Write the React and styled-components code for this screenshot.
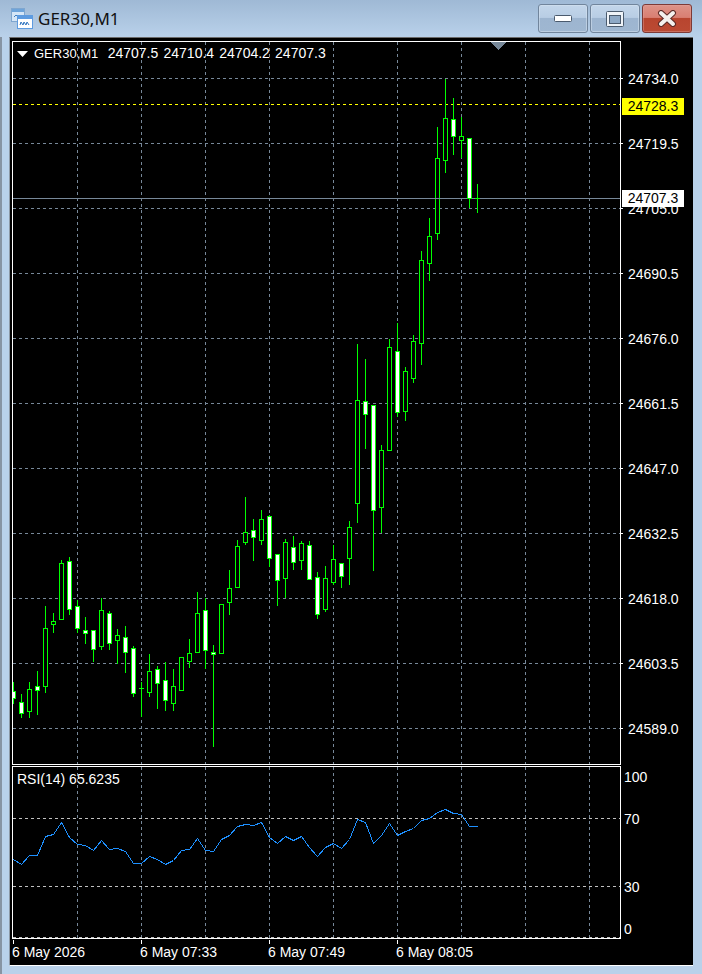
import React from "react";
import styled, { createGlobalStyle } from "styled-components";

const GlobalStyle = createGlobalStyle`
  html, body {
    margin: 0;
    padding: 0;
    background: #b9d1ea;
  }
`;

// candles: [x, high, low, bodyTop, bodyBottom, white]
const candles = [
  [13, 682, 703, 691, 698, 1],
  [21, 694, 717, 702, 713, 1],
  [29, 682, 717, 689, 711, 0],
  [37, 671, 714, 686, 690, 1],
  [45, 606, 692, 628, 686, 0],
  [53, 613, 632, 621, 624, 0],
  [61, 560, 619, 563, 619, 0],
  [69, 557, 614, 561, 609, 1],
  [77, 600, 632, 606, 628, 1],
  [85, 617, 643, 630, 633, 1],
  [93, 630, 661, 630, 649, 1],
  [101, 598, 649, 610, 646, 0],
  [109, 611, 649, 613, 643, 1],
  [117, 629, 663, 635, 640, 0],
  [125, 626, 672, 637, 652, 1],
  [133, 646, 696, 648, 693, 1],
  [141, 682, 716, 688, 688, 0],
  [149, 654, 696, 671, 692, 0],
  [157, 666, 708, 669, 683, 1],
  [165, 662, 710, 680, 700, 1],
  [173, 669, 710, 686, 703, 0],
  [181, 657, 690, 657, 690, 0],
  [189, 639, 667, 653, 661, 0],
  [197, 592, 652, 613, 652, 0],
  [205, 598, 668, 610, 650, 1],
  [213, 645, 746, 652, 654, 1],
  [221, 604, 653, 604, 653, 0],
  [229, 570, 614, 588, 602, 0],
  [237, 540, 587, 546, 587, 0],
  [245, 497, 544, 532, 542, 0],
  [253, 519, 560, 530, 537, 1],
  [261, 510, 544, 519, 540, 0],
  [269, 515, 566, 516, 558, 1],
  [277, 554, 605, 554, 580, 1],
  [285, 539, 597, 542, 578, 0],
  [293, 536, 569, 547, 562, 1],
  [301, 541, 569, 543, 560, 0],
  [309, 541, 579, 545, 579, 1],
  [317, 572, 618, 577, 614, 1],
  [325, 566, 611, 578, 609, 0],
  [333, 545, 584, 559, 582, 0],
  [341, 563, 587, 563, 576, 1],
  [349, 521, 584, 527, 558, 0],
  [357, 344, 522, 400, 503, 0],
  [365, 359, 448, 401, 414, 1],
  [373, 405, 570, 405, 510, 1],
  [381, 445, 532, 450, 507, 0],
  [389, 339, 450, 347, 450, 0],
  [397, 323, 416, 351, 412, 1],
  [405, 367, 420, 371, 411, 0],
  [413, 335, 382, 341, 378, 0],
  [421, 251, 364, 260, 343, 0],
  [429, 218, 280, 236, 263, 0],
  [437, 127, 239, 158, 233, 0],
  [445, 79, 172, 118, 160, 0],
  [453, 98, 154, 119, 136, 1],
  [461, 117, 157, 136, 140, 0],
  [469, 138, 207, 138, 198, 1],
  [477, 184, 212, 198, 198, 0],
];

const rsi = [
  859, 864, 855, 855, 836, 834, 822, 837, 844, 845, 850, 840, 849, 848, 851, 863, 863, 856, 859, 864,
  860, 850, 849, 838, 850, 851, 839, 835, 826, 824, 825, 822, 837, 843, 836, 840, 836, 847, 856, 847,
  843, 848, 839, 819, 822, 843, 835, 823, 835, 831, 828, 820, 818, 812, 809, 813, 814, 826, 826,
];

const prices = [
  "24734.0", "24719.5", "24705.0", "24690.5", "24676.0", "24661.5",
  "24647.0", "24632.5", "24618.0", "24603.5", "24589.0",
];

const gridX = [77, 141, 205, 269, 333, 397, 461, 525, 589];
const gridY = prices.map((_, i) => 78 + i * 65);

const rsiLevels = [
  { label: "100", gap: 1 },
  { label: "70", gap: 22 },
  { label: "30", gap: 48 },
  { label: "0", gap: 22 },
];

const times = ["6 May 2026", "6 May 07:33", "6 May 07:49", "6 May 08:05"];

const Window = styled.div`
  width: 702px;
  height: 974px;
  display: flex;
  flex-direction: column;
  overflow: hidden;
  background: #b9d1ea;
`;

const TitleBar = styled.div`
  height: 37px;
  flex: none;
  display: flex;
  align-items: center;
  padding: 0 10px 0 11px;
  box-sizing: border-box;
  background: linear-gradient(#9fb9d5, #b9d1ea);
`;

const AppIcon = styled.svg`
  width: 22px;
  height: 24px;
  margin-right: 5px;
  flex: none;
`;

const Title = styled.div`
  flex: 1;
  font: 17px "Noto Sans", "Open Sans", sans-serif;
  color: #111;
`;

const Buttons = styled.div`
  display: flex;
  gap: 2px;
`;

const CaptionButton = styled.div`
  width: 50px;
  height: 29px;
  box-sizing: border-box;
  display: flex;
  align-items: center;
  justify-content: center;
  border-radius: 3px;
  border: 1px solid ${(p) => (p.$close ? "#7d3a36" : "#71859c")};
  box-shadow: inset 0 0 0 1px ${(p) => (p.$close ? "#e3a79f66" : "#d5e2f088")};
  background: ${(p) =>
    p.$close
      ? "linear-gradient(#dd9388 0, #d97f72 46%, #b8452f 50%, #bb4a33 100%)"
      : "linear-gradient(#c3d6ea 0, #b8cde4 46%, #9db5d0 50%, #9fb7d1 100%)"};
`;

const Body = styled.div`
  flex: 1;
  display: flex;
  padding: 0 9px 8px 7px;
  border-left: 2px solid #8794a3;
  min-height: 0;
`;

const Frame = styled.div`
  flex: 1;
  box-sizing: border-box;
  background: #000;
  border-top: 1px solid #6b6b6b;
  border-left: 1px solid #8d99a6;
  border-bottom: 1px solid #fff;
  padding: 3px 0 0 2px;
  display: grid;
  grid-template-columns: 609px 1fr;
  grid-template-rows: 724px 173px 1fr;
  row-gap: 1px;
  font: 14px "Liberation Sans", Arial, sans-serif;
  color: #fff;
`;

const Pane = styled.div`
  position: relative;
  box-sizing: border-box;
  border: 1px solid #fff;
`;

const PlotSvg = styled.svg`
  display: block;
  width: 100%;
  height: 100%;
  shape-rendering: crispEdges;
`;

const Legend = styled.div`
  position: absolute;
  left: 4px;
  top: ${(p) => p.$top}px;
  display: flex;
  align-items: center;
  white-space: pre;
  line-height: 17px;
  word-spacing: ${(p) => p.$wordGap || 0}px;
`;

const LegendName = styled.span`
  font-size: 13px;
  margin-left: 6px;
  margin-right: -1px;
`;

const Marker = styled.svg`
  width: 11px;
  height: 6px;
  flex: none;
`;

const PriceAxis = styled.div`
  position: relative;
  padding-top: 5px;
`;

const PriceRow = styled.div`
  height: 65px;
  display: flex;
  align-items: center;
  gap: 5px;
  line-height: 16px;

  &::before {
    content: "";
    width: 2px;
    height: 1px;
    background: #fff;
  }
`;

const PriceBadge = styled.div`
  position: absolute;
  left: 1px;
  top: ${(p) => p.$top}px;
  width: 62px;
  height: 17px;
  line-height: 17px;
  text-align: center;
  color: #000;
  background: ${(p) => p.$bg};
`;

const RsiAxis = styled.div`
  display: flex;
  flex-direction: column;
  padding-left: 3px;
`;

const RsiLabel = styled.div`
  height: 20px;
  line-height: 20px;
  margin-top: ${(p) => p.$gap}px;
`;

const TimeAxis = styled.div`
  display: grid;
  grid-template-columns: repeat(4, 128px);
  align-self: start;
`;

const TimeCell = styled.div`
  line-height: 16px;
  white-space: nowrap;
`;

const TimeTick = styled.div`
  width: 1px;
  height: 4px;
  margin-left: 1px;
  background: #fff;
`;

function Candle({ x, high, low, top, bottom, white }) {
  const h = bottom - top + 1;
  return (
    <g>
      <rect x={x} y={high} width={1} height={low - high + 1} fill="#00ff00" />
      <rect x={x - 2} y={top} width={5} height={h} fill="#00ff00" />
      {h > 2 && (
        <rect x={x - 1} y={top + 1} width={3} height={h - 2} fill={white ? "#fff" : "#000"} />
      )}
    </g>
  );
}

function GridLines({ ys, top, bottom, colorH }) {
  return (
    <g fill="none" strokeWidth="1" strokeDasharray="3 3">
      {gridX.map((x) => (
        <line key={x} x1={x + 0.5} x2={x + 0.5} y1={top} y2={bottom} stroke="#778899" />
      ))}
      {ys.map((y) => (
        <line key={y} x1="13" x2="620" y1={y + 0.5} y2={y + 0.5} stroke={colorH} />
      ))}
    </g>
  );
}

function App() {
  const rsiPoints = rsi.map((y, i) => `${13 + i * 8 + 0.5},${y + 0.5}`).join(" ");

  return (
    <Window>
      <GlobalStyle />
      <TitleBar>
        <AppIcon viewBox="0 0 22 24">
          <rect x="0.5" y="1.5" width="13" height="13" fill="#d5e6f7" stroke="#7fa6cf" />
          <rect x="1" y="2" width="12" height="3" fill="#6ea4da" />
          <path d="M3 10 L5 8 L7 10 L9 8 L11 10" fill="none" stroke="#3f7fc0" />
          <rect x="6.5" y="8.5" width="15" height="13" fill="#fff" stroke="#5d9be0" />
          <rect x="7" y="9" width="14" height="3" fill="#5d9be0" />
          <path d="M9 18 L10 15 L12 18 L13 15 L15 18 L16 15 L18 18" fill="none" stroke="#2f74c0" />
        </AppIcon>
        <Title>GER30,M1</Title>
        <Buttons>
          <CaptionButton>
            <svg width="18" height="7" viewBox="0 0 18 7">
              <rect x="0.5" y="0.5" width="17" height="6" rx="1" fill="#fff" stroke="#4a5a6d" />
            </svg>
          </CaptionButton>
          <CaptionButton>
            <svg width="18" height="16" viewBox="0 0 18 16">
              <rect x="0.5" y="0.5" width="17" height="15" rx="1" fill="#eef3f8" stroke="#4a5a6d" />
              <rect x="3.5" y="4.5" width="11" height="8" fill="#8ea9c6" stroke="#4a5a6d" />
            </svg>
          </CaptionButton>
          <CaptionButton $close>
            <svg width="20" height="17" viewBox="0 0 20 17">
              <path d="M4 3 L16 14 M16 3 L4 14" stroke="#5b2a26" strokeWidth="6" strokeLinecap="round" />
              <path d="M4 3 L16 14 M16 3 L4 14" stroke="#f4f1ee" strokeWidth="4" strokeLinecap="round" />
            </svg>
          </CaptionButton>
        </Buttons>
      </TitleBar>
      <Body>
        <Frame>
          <Pane>
            <PlotSvg viewBox="13 42 607 722">
              <GridLines ys={gridY} top={42} bottom={764} colorH="#778899" />
              <polygon points="490,42 506,42 498,50" fill="#778899" />
              <line x1="13" x2="620" y1="104.5" y2="104.5" stroke="#ffff00" strokeDasharray="3 3" />
              {candles.map(([x, high, low, top, bottom, white]) => (
                <Candle key={x} x={x} high={high} low={low} top={top} bottom={bottom} white={white} />
              ))}
              <line x1="13" x2="620" y1="198.5" y2="198.5" stroke="#778899" />
              {candles.slice(-2).map(([x, high, low, top, bottom, white]) => (
                <Candle key={x} x={x} high={high} low={low} top={top} bottom={bottom} white={white} />
              ))}
            </PlotSvg>
            <Legend $top={3} $wordGap={1.3}>
              <Marker viewBox="0 0 11 6">
                <polygon points="0,0 11,0 5.5,6" fill="#fff" />
              </Marker>
              <LegendName>GER30,M1</LegendName>
              {"  24707.5 24710.4 24704.2 24707.3"}
            </Legend>
          </Pane>
          <PriceAxis>
            {prices.map((price) => (
              <PriceRow key={price}>{price}</PriceRow>
            ))}
            <PriceBadge $top={57} $bg="#ffff00">24728.3</PriceBadge>
            <PriceBadge $top={149} $bg="#ffffff">24707.3</PriceBadge>
          </PriceAxis>
          <Pane>
            <PlotSvg viewBox="13 767 607 171">
              <GridLines ys={[818, 886, 937]} top={767} bottom={938} colorH="#c0c0c0" />
              <polyline points={rsiPoints} fill="none" stroke="#1e90ff" strokeWidth="1" />
            </PlotSvg>
            <Legend $top={4}>RSI(14) 65.6235</Legend>
          </Pane>
          <RsiAxis>
            {rsiLevels.map((level) => (
              <RsiLabel key={level.label} $gap={level.gap}>{level.label}</RsiLabel>
            ))}
          </RsiAxis>
          <TimeAxis>
            {times.map((time) => (
              <TimeCell key={time}>
                <TimeTick />
                {time}
              </TimeCell>
            ))}
          </TimeAxis>
        </Frame>
      </Body>
    </Window>
  );
}

export default App;
